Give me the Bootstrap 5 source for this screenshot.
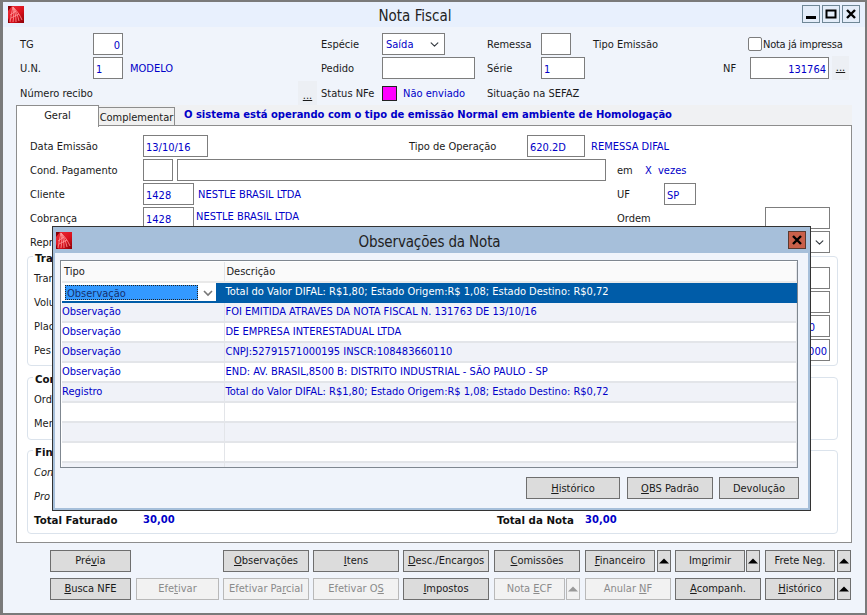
<!DOCTYPE html>
<html lang="pt-BR">
<head>
<meta charset="utf-8">
<title>Nota Fiscal</title>
<link href="https://cdn.jsdelivr.net/npm/bootstrap@5.3.0/dist/css/bootstrap.min.css" rel="stylesheet">
<style>
html,body{margin:0;width:867px;height:615px;overflow:hidden;background:#808080}
body{font-family:"DejaVu Sans Condensed","DejaVu Sans",sans-serif;font-stretch:condensed;font-size:11px;line-height:14px;color:#1a1a1a}
.win{position:relative;width:867px;height:615px;border:solid #7a7a7a;border-width:2px 2px 2px 3px;background:#f0f4fb;overflow:hidden}
.tbar{height:25px;background:#e8f0fd;font-size:15px;padding-left:5px}
.ttl{position:absolute;left:-38px;right:0;text-align:center;top:4px;line-height:20px;color:#222}
.ctls{margin-top:-2px;margin-right:5px}
.ctl{width:18px;height:18px;border:1px solid #6f8796;background:#e4edf9;margin-left:2px;padding:0;border-radius:0}
.hrow{height:24px;padding-left:17px}
.hrow.r3{height:25px}
.hrow.r1{margin-top:5px}
.frow{height:24px}
.frow>span,.frow>em,.hrow>span{padding-top:2px}
.hrow.r3>span{padding-top:3px}
.hrow>.ck,.hrow>.dots,.hrow>.sq{padding-top:0}
.frow>.blk,.frow>.blt{padding-top:0}
.f-in.form-control,.f-sel.form-select{height:22px;min-height:22px;border:1px solid #7d7d7d;border-radius:0;padding:2px 1px 0 2px;font:inherit;font-size:11px;color:#0000c8;background-color:#fff;box-shadow:none}
.f-sel.form-select{padding:2px 0 0 3px;background-position:right 4px center;background-size:11px 9px}
.f-in.rt{text-align:right;padding-right:2px}
.f-in.rt2{text-align:right;padding-right:14px}
.blue{color:#0000c8}
.blt{color:#0000c8;font-weight:700;font-family:"DejaVu Sans",sans-serif;font-stretch:normal;font-size:10px}
.blk{font-weight:700;font-family:"DejaVu Sans",sans-serif;font-stretch:normal;font-size:10.25px;color:#111}
.banner{margin-left:9px;line-height:20px;letter-spacing:-.02px}
.dots{width:19px;height:24px;background:#eceff4;text-align:center;line-height:24px;text-decoration:underline;text-underline-offset:1px}
.dots.sm{width:17px}
.sq{width:15px;height:15px;background:#f0f;border:1px solid #222;margin-top:2px}
.tight{letter-spacing:-.25px}
.w2{width:2px}.w3{width:3px}.w4{width:4px}.w6{width:6px}.w7{width:7px}.w11{width:11px}.w12{width:12px}.w13{width:13px}.w14{width:14px}.w22{width:22px}.w27{width:27px}.w28{width:28px}.w30{width:30px}.w32{width:32px}.w42{width:42px}.w44{width:44px}.w47{width:47px}.w51{width:51px}.w54{width:54px}.w58{width:58px}.w61{width:61px}.w63{width:63px}.w65{width:65px}.w70{width:70px}.w71{width:71px}.w73{width:73px}.w79{width:79px}.w80{width:80px}.w81{width:81px}.w83{width:83px}.w84{width:84px}.w86{width:86px}.w88{width:88px}.w93{width:93px}.w94{width:94px}.w109{width:109px}.w113{width:113px}.w118{width:118px}.w138{width:138px}.w148{width:148px}.w155{width:155px}.w191{width:191px}.w198{width:198px}.w201{width:201px}.w278{width:278px}.w354{width:354px}.w419{width:419px}.w421{width:421px}.w429{width:429px}.w735{width:735px}
.noshr>*{flex:none}
.up-4{margin-top:-4px}
.ck{width:14px;height:14px;border:1px solid #7d7d7d;background:#fff;border-radius:2px;margin-right:1px}
.tabs{height:20px;background:#f0f1f3;margin-left:13px;margin-right:13px;position:relative}
.tab1,.tab2{border:1px solid #8d8d8d;text-align:center}
.tab1{width:83px;height:22px;background:#fff;border-bottom:0;position:relative;z-index:2;line-height:19px}
.tab2{width:76px;height:19px;margin-top:2px;background:#f0f0f0;border-left:0;line-height:19px}
.pane{margin-left:13px;width:836px;height:418px;background:#fff;border:1px solid #8d8d8d;padding:8px 7px 0 13px;position:relative}
.gbox{border:1px solid #dbe3ec;border-radius:4px;margin-left:-3px;width:811px;padding-left:6px}
.gleg{display:block;width:fit-content;margin:-6px 0 0 -1px;padding:0 2px;height:15px;line-height:15px;background:#fff}
.gb1{margin-top:2px;height:110px}
.gb2{margin-top:11px;height:63px}
.gb3{margin-top:10px;height:84px}
.rin{margin-left:auto;margin-right:7px}
.modal-win{position:absolute;left:49px;top:224px;width:759px;height:285px;background:#f0f4fb;border:1px solid #333;display:flex;flex-direction:column;z-index:5;box-shadow:inset 0 0 0 2px #a6bfda}
.mbar{height:26px;background:#a6bfda;font-size:15px;position:relative;flex:none;padding-left:3px}
.mttl{position:absolute;left:0;right:4px;top:5px;text-align:center;line-height:20px;color:#222;letter-spacing:-.15px}
.mx{position:absolute;right:4px;top:4px;width:18px;height:18px;background:#c9604a;border:1px solid #5a3a30;padding:0;border-radius:0}
.grid-wrap{margin:7px 0 0 7px;width:738px;height:208px;border:1px solid #7f8790;background:#fff;overflow:hidden;padding:1px 0 0 1px}
.obs.table{margin:0;width:735px;table-layout:fixed;font-size:11px;--bs-table-bg:transparent;--bs-table-border-color:#e3e5e9;color:#0000c8}
.obs.table th,.obs.table td{height:20px;padding:0 2px 0 0;border-width:0 1px 2px 0;border-style:solid;border-color:#e3e5e9;font-weight:400;line-height:16px;white-space:nowrap;color:#0000c8;box-shadow:none;background:transparent;vertical-align:middle}
.obs.table th{color:#222;background:#fafafa;border-bottom:2px solid #e9e9e9;padding-left:2px}
.obs.table td+td{padding-left:1px}
.obs.table .c1{width:162px}
.obs.table tr.alt td{background:#f0f2f8}
.obs.table tr.sel td{background:#005ca8;color:#fff;border-color:#005ca8}
.combo{height:18px;background:#fff;margin-right:6px;padding:1px 0 0 3px}
.combo-t{width:133px;height:15px;line-height:15px;background:#3399ff;color:#16306e;border:1px dotted #222;padding-left:1px;overflow:hidden}
.chev{margin-right:3px}
.mfoot{margin:9px 0 0 0;padding-right:11px}
.wbtn.btn{height:22px;padding:0;border:1px solid #6e6e6e;border-radius:0;background:#dcdcdc;color:#1a1a1a;font:inherit;font-size:11px;line-height:20px;flex:none;opacity:1}
.wbtn.btn.off{background:#f2f2f2;border-color:#b9b9b9;color:#8b8b8b}
.mfoot .wbtn.btn{padding-top:2px;line-height:18px}
.wbtn u{text-underline-offset:1px}
.brow{height:22px;padding-left:47px}
.brow2{margin-top:6px}
.bar1{margin-top:7px}
.m1{margin-left:1px}.m2{margin-left:2px}.m4{margin-left:4px}.m5{margin-left:5px}.m6{margin-left:6px}.m7{margin-left:7px}.m92{margin-left:92px}
.up{display:block;margin:0 auto}
</style>
</head>
<body>
<div class="win">
  <div class="tbar d-flex align-items-center">
    <svg width="16" height="17" viewBox="0 0 16 17"><defs><linearGradient id="r1" x1="0" y1="0" x2="1" y2="1"><stop offset="0" stop-color="#f0303a"/><stop offset=".6" stop-color="#d8101c"/><stop offset="1" stop-color="#8a0006"/></linearGradient></defs><rect width="16" height="17" fill="url(#r1)"/><path d="M0 0h4L0 5zM0 12l2 5H0z" fill="#8a0006"/><path d="M2 16C3 10 4 5 5 1M5 16C6 10 6 5 5 1M8 16C8 10 7 5 5 1M11 15C10 10 8 5 5 1M14 14C12 9 9 5 5 1M2 9L8 5M3 12L11 8" stroke="#ff9c9c" stroke-width=".8" fill="none"/></svg>
    <div class="ttl">Nota Fiscal</div>
    <div class="ctls ms-auto d-flex align-items-center">
      <button class="ctl" aria-label="min"><svg width="16" height="16" viewBox="0 0 16 16"><rect x="3" y="10" width="10" height="3" fill="#000"/></svg></button>
      <button class="ctl" aria-label="max"><svg width="16" height="16" viewBox="0 0 16 16"><path d="M3.500 4.500h9v7h-9z" fill="none" stroke="#000" stroke-width="2"/></svg></button>
      <button class="ctl" aria-label="fechar"><svg width="16" height="16" viewBox="0 0 16 16"><path d="M4 4l8 8M12 4l-8 8" stroke="#000" stroke-width="2.400"/></svg></button>
    </div>
  </div>

  <div class="hrow r1 d-flex align-items-center noshr">
    <span class="w73">TG</span><input class="form-control f-in rt w30" value="0">
    <span class="w198"></span><span class="w61">Espécie</span>
    <select class="form-select f-sel w63"><option>Saída</option></select>
    <span class="w42"></span><span class="w54">Remessa</span><input class="form-control f-in w30">
    <span class="w22"></span><span class="w155">Tipo Emissão</span>
    <span class="ck"></span><span class="tight">Nota já impressa</span>
  </div>
  <div class="hrow d-flex align-items-center noshr">
    <span class="w73">U.N.</span><input class="form-control f-in w30" value="1">
    <span class="w7"></span><span class="w191 blue">MODELO</span><span class="w61">Pedido</span>
    <input class="form-control f-in w93">
    <span class="w12"></span><span class="w54">Série</span><input class="form-control f-in w44" value="1">
    <span class="w138"></span><span class="w27">NF</span><input class="form-control f-in rt w79" value="131764">
    <span class="w3"></span><span class="dots sm">...</span>
  </div>
  <div class="hrow r3 d-flex align-items-center noshr">
    <span class="w278">Número recibo</span><span class="dots">...</span><span class="w4"></span>
    <span class="w61">Status NFe</span><span class="sq"></span><span class="w6"></span><span class="w84 blue">Não enviado</span>
    <span>Situação na SEFAZ</span>
  </div>

  <div class="tabs d-flex noshr">
    <div class="tab1">Geral</div><div class="tab2">Complementar</div>
    <span class="blt banner">O sistema está operando com o tipo de emissão Normal em ambiente de Homologação</span>
  </div>

  <div class="pane">
    <div class="frow d-flex align-items-center noshr">
      <span class="w113">Data Emissão</span><input class="form-control f-in w65" value="13/10/16">
      <span class="w201"></span><span class="w118">Tipo de Operação</span><input class="form-control f-in w58" value="620.2D">
      <span class="w6"></span><span class="blue">REMESSA DIFAL</span>
    </div>
    <div class="frow d-flex align-items-center noshr">
      <span class="w113">Cond. Pagamento</span><input class="form-control f-in w30"><span class="w4"></span><input class="form-control f-in w429">
      <span class="w11"></span><span class="w28">em</span><span class="blue w13">X</span><span class="blue">vezes</span>
    </div>
    <div class="frow d-flex align-items-center noshr">
      <span class="w113">Cliente</span><input class="form-control f-in w51" value="1428"><span class="w4"></span>
      <span class="blue w419">NESTLE BRASIL LTDA</span><span class="w47">UF</span><input class="form-control f-in w32" value="SP">
    </div>
    <div class="frow d-flex align-items-center noshr">
      <span class="w113">Cobrança</span><input class="form-control f-in w51" value="1428"><span class="w2"></span>
      <span class="blue w421 up-4">NESTLE BRASIL LTDA</span><span class="w148">Ordem</span><input class="form-control f-in w65">
    </div>
    <div class="frow d-flex align-items-center noshr">
      <span class="w735">Repr</span><select class="form-select f-sel w65"></select>
    </div>

    <div class="gbox gb1">
      <span class="gleg blk">Tra</span>
      <div class="frow d-flex align-items-center noshr"><span>Tran</span><input class="form-control f-in w65 rin"></div>
      <div class="frow d-flex align-items-center noshr"><span>Volu</span><input class="form-control f-in w65 rin"></div>
      <div class="frow d-flex align-items-center noshr"><span>Plac</span><input class="form-control f-in w65 rt2 rin" value="0,0"></div>
      <div class="frow d-flex align-items-center noshr"><span>Pes</span><input class="form-control f-in w65 rt rin" value="0,000"></div>
    </div>
    <div class="gbox gb2">
      <span class="gleg blk">Con</span>
      <div class="frow d-flex align-items-center"><span>Ord</span></div>
      <div class="frow d-flex align-items-center"><span>Men</span></div>
    </div>
    <div class="gbox gb3">
      <span class="gleg blk">Fin</span>
      <div class="frow d-flex align-items-center"><em>Con</em></div>
      <div class="frow d-flex align-items-center"><em>Pro</em></div>
      <div class="frow d-flex align-items-center noshr">
        <span class="blk w109">Total Faturado</span><span class="blt w354">30,00</span>
        <span class="blk w88">Total da Nota</span><span class="blt">30,00</span>
      </div>
    </div>
  </div>

  <div class="brow bar1 d-flex noshr">
    <button class="btn wbtn w81">Pré<u>v</u>ia</button>
    <button class="btn wbtn w86 m92"><u>O</u>bservações</button>
    <button class="btn wbtn w86 m4"><u>I</u>tens</button>
    <button class="btn wbtn w86 m4"><u>D</u>esc./Encargos</button>
    <button class="btn wbtn w86 m5"><u>C</u>omissões</button>
    <button class="btn wbtn w70 m5"><u>F</u>inanceiro</button>
    <button class="btn wbtn w14 m2" aria-label="mais"><svg class="up" width="10" height="6" viewBox="0 0 10 6"><path d="M0 5.500L5 .5l5 5z" fill="#000"/></svg></button>
    <button class="btn wbtn w70 m4">Im<u>p</u>rimir</button>
    <button class="btn wbtn w14 m1" aria-label="mais"><svg class="up" width="10" height="6" viewBox="0 0 10 6"><path d="M0 5.500L5 .5l5 5z" fill="#000"/></svg></button>
    <button class="btn wbtn w70 m5">Frete Neg.</button>
    <button class="btn wbtn w14 m2" aria-label="mais"><svg class="up" width="10" height="6" viewBox="0 0 10 6"><path d="M0 5.500L5 .5l5 5z" fill="#000"/></svg></button>
  </div>
  <div class="brow brow2 d-flex noshr">
    <button class="btn wbtn w81"><u>B</u>usca NFE</button>
    <button class="btn wbtn off w83 m5">Efe<u>t</u>ivar</button>
    <button class="btn wbtn off w86 m4">Efetivar Pa<u>r</u>cial</button>
    <button class="btn wbtn off w86 m4">Efetivar O<u>S</u></button>
    <button class="btn wbtn w86 m4"><u>I</u>mpostos</button>
    <button class="btn wbtn off w71 m5">Nota <u>E</u>CF</button>
    <button class="btn wbtn off w14 m1" aria-label="mais"><svg class="up" width="10" height="6" viewBox="0 0 10 6"><path d="M0 5.500L5 .5l5 5z" fill="#999"/></svg></button>
    <button class="btn wbtn off w86 m5">Anular <u>N</u>F</button>
    <button class="btn wbtn w86 m4"><u>A</u>companh.</button>
    <button class="btn wbtn w70 m4"><u>H</u>istórico</button>
    <button class="btn wbtn w14 m2" aria-label="mais"><svg class="up" width="10" height="6" viewBox="0 0 10 6"><path d="M0 5.500L5 .5l5 5z" fill="#000"/></svg></button>
  </div>

  <div class="modal-win">
    <div class="mbar d-flex align-items-center">
      <svg width="16" height="17" viewBox="0 0 16 17"><rect width="16" height="17" fill="url(#r1)"/><path d="M0 0h4L0 5zM0 12l2 5H0z" fill="#8a0006"/><path d="M2 16C3 10 4 5 5 1M5 16C6 10 6 5 5 1M8 16C8 10 7 5 5 1M11 15C10 10 8 5 5 1M14 14C12 9 9 5 5 1M2 9L8 5M3 12L11 8" stroke="#ff9c9c" stroke-width=".8" fill="none"/></svg>
      <div class="mttl">Observações da Nota</div>
      <button class="mx" aria-label="fechar"><svg width="16" height="16" viewBox="0 0 16 16"><path d="M4 4l8 8M12 4l-8 8" stroke="#000" stroke-width="2.400"/></svg></button>
    </div>
    <div class="grid-wrap">
      <table class="table obs">
        <thead><tr><th class="c1">Tipo</th><th>Descrição</th></tr></thead>
        <tbody>
          <tr class="sel"><td class="c1"><div class="combo d-flex align-items-center"><span class="combo-t">Observação</span><svg class="chev ms-auto" width="10" height="8" viewBox="0 0 10 8"><path d="M1 2l4 4 4-4" stroke="#777" stroke-width="1.600" fill="none"/></svg></div></td><td>Total do Valor DIFAL: R$1,80; Estado Origem:R$ 1,08; Estado Destino: R$0,72</td></tr>
          <tr class="alt"><td>Observação</td><td>FOI EMITIDA ATRAVES DA NOTA FISCAL N. 131763 DE 13/10/16</td></tr>
          <tr><td>Observação</td><td>DE EMPRESA INTERESTADUAL LTDA</td></tr>
          <tr class="alt"><td>Observação</td><td>CNPJ:52791571000195 INSCR:108483660110</td></tr>
          <tr><td>Observação</td><td>END: AV. BRASIL,8500 B: DISTRITO INDUSTRIAL - SÃO PAULO - SP</td></tr>
          <tr class="alt"><td>Registro</td><td>Total do Valor DIFAL: R$1,80; Estado Origem:R$ 1,08; Estado Destino: R$0,72</td></tr>
          <tr><td></td><td></td></tr>
          <tr class="alt"><td></td><td></td></tr>
          <tr><td></td><td></td></tr>
          <tr class="alt"><td></td><td></td></tr>
        </tbody>
      </table>
    </div>
    <div class="mfoot d-flex justify-content-end">
      <button class="btn wbtn w94"><u>H</u>istórico</button>
      <button class="btn wbtn w86 m7"><u>O</u>BS Padrão</button>
      <button class="btn wbtn w80 m6">Devolução</button>
    </div>
  </div>
</div>
</body>
</html>
